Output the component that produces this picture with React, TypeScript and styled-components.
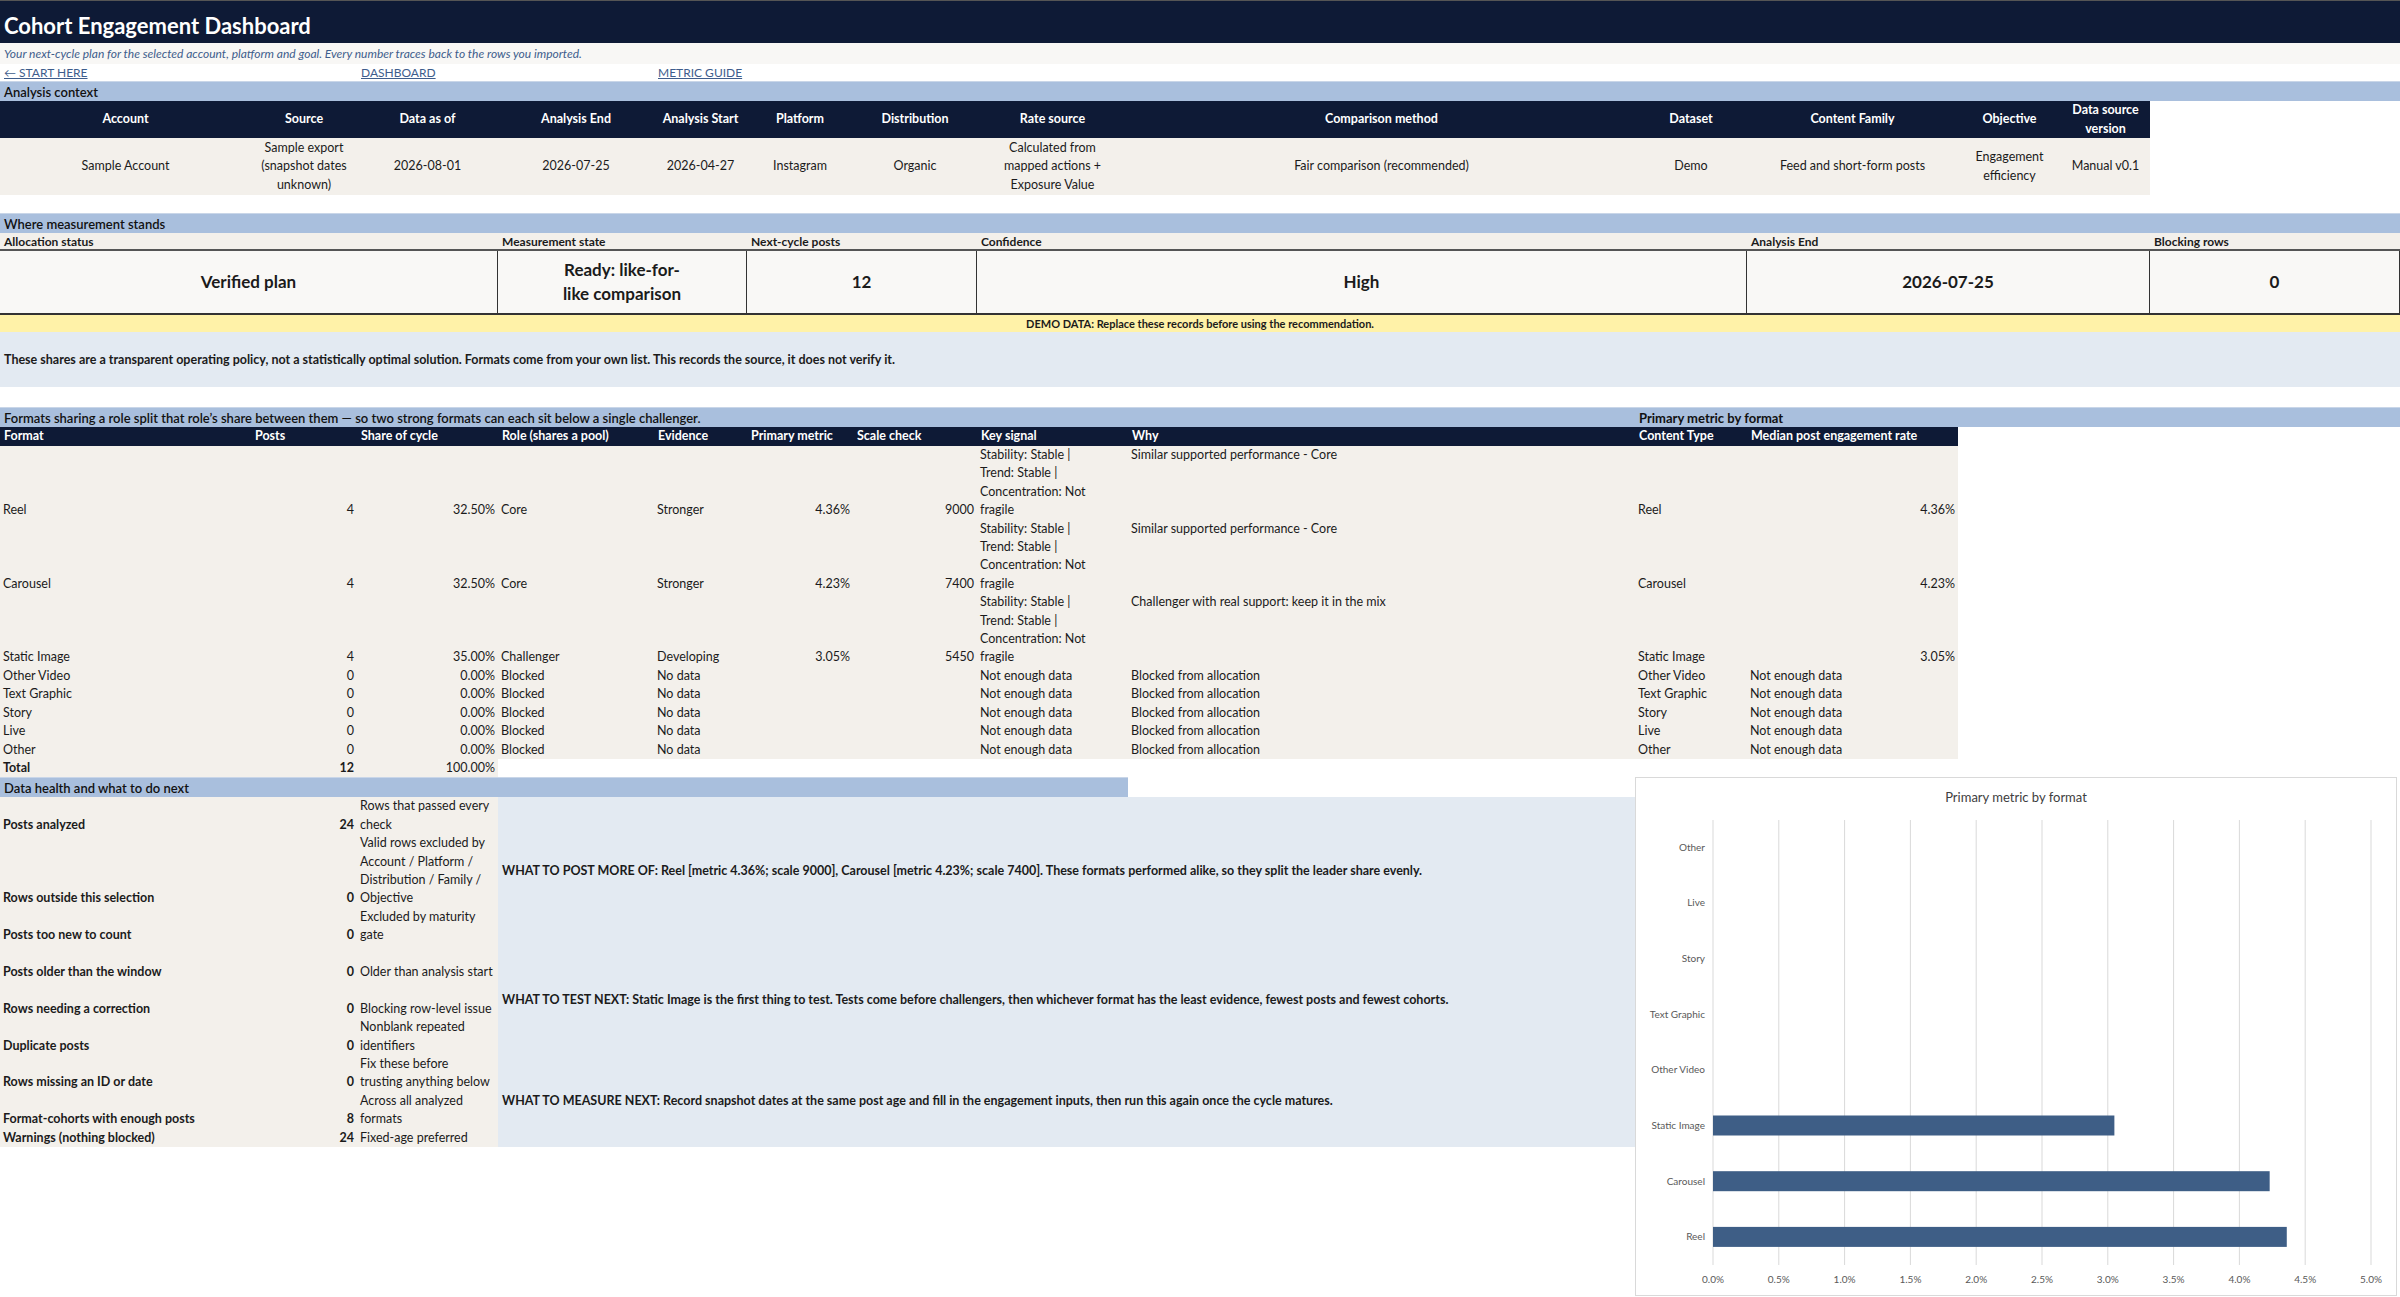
import React from "react";
import styled, { createGlobalStyle } from "styled-components";

const COLS = "251px 106px 141px 156px 93px 106px 124px 151px 507px 112px 211px 103px 89px 250px";
const L = 18.4;
const NAVY = "#0e1a36";
const BAND = "#a9bfdd";
const BEIGE = "#f3f0eb";
const SOFT = "#e3eaf2";

const Global = createGlobalStyle`
  html, body { margin: 0; background: #fff; }
  body { font-family: Lato, "Open Sans", sans-serif; font-size: 12.5px; color: #1b1b1b; }
  * { box-sizing: border-box; }
`;

const Page = styled.div`width: 2400px; display: flex; flex-direction: column;`;
const TitleBar = styled.div`
  height: 43px; background: ${NAVY}; color: #fff; font-weight: 700; font-size: 22px;
  display: flex; align-items: flex-end; padding: 0 4px 4px; border-top: 1px solid #555;
`;
const Subtitle = styled.div`
  height: 21px; background: #f8f7f5; color: #3e5d8c; font-style: italic; font-size: 12px;
  display: flex; align-items: center; padding-left: 4px;
`;
const Sheet = styled.div<{ $mt?: number }>`
  display: grid; grid-template-columns: ${COLS}; margin-top: ${(p) => p.$mt ?? 0}px;
`;
const LinkCell = styled.a<{ $col: string }>`
  grid-column: ${(p) => p.$col}; height: 17px; line-height: 17px; font-size: 12px;
  color: #3e5d8c; text-decoration: underline; padding-left: 4px;
`;
const Band = styled.div<{ $col: string; $bold?: boolean }>`
  grid-column: ${(p) => p.$col}; height: 20px; background: ${BAND}; display: flex; align-items: center;
  padding-left: 4px; font-weight: ${(p) => (p.$bold ? 700 : 600)}; font-size: 13px; color: #111;
  border-top: 1px solid #c9d6e8;
`;
const HeadCell = styled.div<{ $h: number; $left?: boolean }>`
  background: ${NAVY}; color: #fff; font-weight: 700; height: ${(p) => p.$h}px;
  display: flex; align-items: center; justify-content: ${(p) => (p.$left ? "flex-start" : "center")};
  text-align: ${(p) => (p.$left ? "left" : "center")}; padding: 0 4px; line-height: ${L}px;
`;
const CtxCell = styled.div`
  background: ${BEIGE}; height: 57px; display: flex; align-items: center; justify-content: center;
  text-align: center; line-height: ${L}px; padding: 0 4px;
`;
const Empty = styled.div<{ $col?: string }>`grid-column: ${(p) => p.$col ?? "auto"};`;
const LabelCell = styled.div<{ $col: string }>`
  grid-column: ${(p) => p.$col}; height: 18px; background: ${BEIGE}; font-weight: 700; font-size: 12px;
  display: flex; align-items: flex-end; padding-left: 4px; border-bottom: 2px solid #555;
`;
const BigBox = styled.div<{ $col: string }>`
  grid-column: ${(p) => p.$col}; height: 64px; background: #f9f8f6; border-right: 1px solid #333;
  border-bottom: 2px solid #333; display: flex; align-items: center; justify-content: center;
  text-align: center; font-weight: 700; font-size: 17px; line-height: 24px; padding: 0 60px;
  &:first-child { border-left: 1px solid #333; }
`;
const Demo = styled.div`
  height: 17px; background: #fff2a8; font-weight: 700; font-size: 11px; display: flex;
  align-items: center; justify-content: center;
`;
const Note = styled.div`
  height: 55px; background: ${SOFT}; font-weight: 700; font-size: 12.5px; display: flex;
  align-items: center; padding-left: 4px;
`;
const FCell = styled.div<{ $h: number; $right?: boolean; $top?: boolean; $bold?: boolean; $bg?: string }>`
  background: ${(p) => p.$bg ?? BEIGE}; min-height: ${(p) => p.$h}px; display: flex; flex-direction: column;
  justify-content: ${(p) => (p.$top ? "flex-start" : "flex-end")};
  align-items: ${(p) => (p.$right ? "flex-end" : "flex-start")}; line-height: ${L}px;
  padding: 0 3px; font-weight: ${(p) => (p.$bold ? 700 : 400)}; white-space: nowrap;
`;
const HealthWrap = styled.div`
  display: grid; grid-template-columns: 1635px 765px; align-items: start;
`;
const HealthGrid = styled.div`
  display: grid; grid-template-columns: 251px 106px 141px 1137px; grid-auto-rows: auto;
`;
const Advice = styled.div<{ $row: string }>`
  grid-column: 4; grid-row: ${(p) => p.$row}; background: ${SOFT}; display: flex; align-items: center;
  padding-left: 4px; font-weight: 700; font-size: 12.5px; white-space: nowrap;
`;
const ChartBox = styled.div`
  width: 762px; height: 519px; border: 1px solid #d9d9d9; background: #fff;
`;

const ctxHead = ["Account", "Source", "Data as of", "Analysis End", "Analysis Start", "Platform", "Distribution", "Rate source", "Comparison method", "Dataset", "Content Family", "Objective", "Data source version"];
const ctxData: React.ReactNode[] = [
  "Sample Account",
  <>Sample export<br />(snapshot dates<br />unknown)</>,
  "2026-08-01", "2026-07-25", "2026-04-27", "Instagram", "Organic",
  <>Calculated from<br />mapped actions +<br />Exposure Value</>,
  "Fair comparison (recommended)", "Demo", "Feed and short-form posts",
  <>Engagement<br />efficiency</>, "Manual v0.1",
];

const fHead = ["Format", "Posts", "Share of cycle", "Role (shares a pool)", "Evidence", "Primary metric", "Scale check", "Key signal", "Why", "Content Type", "Median post engagement rate"];
const signal = ["Stability: Stable |", "Trend: Stable |", "Concentration: Not", "fragile"];
type FRow = { f: string; p: string; s: string; r: string; e: string; m?: string; sc?: string; k: string[]; w: string; med?: string };
const fRows: FRow[] = [
  { f: "Reel", p: "4", s: "32.50%", r: "Core", e: "Stronger", m: "4.36%", sc: "9000", k: signal, w: "Similar supported performance - Core", med: "4.36%" },
  { f: "Carousel", p: "4", s: "32.50%", r: "Core", e: "Stronger", m: "4.23%", sc: "7400", k: signal, w: "Similar supported performance - Core", med: "4.23%" },
  { f: "Static Image", p: "4", s: "35.00%", r: "Challenger", e: "Developing", m: "3.05%", sc: "5450", k: signal, w: "Challenger with real support: keep it in the mix", med: "3.05%" },
  ...["Other Video", "Text Graphic", "Story", "Live", "Other"].map((f) => ({ f, p: "0", s: "0.00%", r: "Blocked", e: "No data", k: ["Not enough data"], w: "Blocked from allocation" })),
];

const health: { l: string; v: string; d: string[]; n: number }[] = [
  { l: "Posts analyzed", v: "24", d: ["Rows that passed every", "check"], n: 2 },
  { l: "Rows outside this selection", v: "0", d: ["Valid rows excluded by", "Account / Platform /", "Distribution / Family /", "Objective"], n: 4 },
  { l: "Posts too new to count", v: "0", d: ["Excluded by maturity", "gate"], n: 2 },
  { l: "Posts older than the window", v: "0", d: ["Older than analysis start"], n: 2 },
  { l: "Rows needing a correction", v: "0", d: ["Blocking row-level issue"], n: 2 },
  { l: "Duplicate posts", v: "0", d: ["Nonblank repeated", "identifiers"], n: 2 },
  { l: "Rows missing an ID or date", v: "0", d: ["Fix these before", "trusting anything below"], n: 2 },
  { l: "Format-cohorts with enough posts", v: "8", d: ["Across all analyzed", "formats"], n: 2 },
  { l: "Warnings (nothing blocked)", v: "24", d: ["Fixed-age preferred"], n: 1 },
];

function Chart() {
  const cats = ["Other", "Live", "Story", "Text Graphic", "Other Video", "Static Image", "Carousel", "Reel"];
  const vals: Record<string, number> = { "Static Image": 3.05, Carousel: 4.23, Reel: 4.36 };
  const x0 = 77, x1 = 735, w = x1 - x0;
  const y0 = 42, step = 55.7, top = 69;
  return (
    <svg width="760" height="517" viewBox="0 0 760 517" fontFamily="Lato, sans-serif">
      <text x="380" y="24" textAnchor="middle" fontSize="13" fill="#404040">Primary metric by format</text>
      {Array.from({ length: 11 }, (_, i) => {
        const x = x0 + (w * i) / 10;
        return (
          <g key={i}>
            <line x1={x} x2={x} y1={y0} y2={487} stroke="#d9d9d9" strokeWidth="1" />
            <text x={x} y={505} textAnchor="middle" fontSize="10" fill="#595959">{(i * 0.5).toFixed(1)}%</text>
          </g>
        );
      })}
      {cats.map((c, i) => {
        const y = top + i * step;
        const v = vals[c];
        return (
          <g key={c}>
            <text x={x0 - 8} y={y + 3.5} textAnchor="end" fontSize="10" fill="#595959">{c}</text>
            {v && <rect x={x0} y={y - 10} width={(w * v) / 5} height={20} fill="#3e5e86" />}
          </g>
        );
      })}
    </svg>
  );
}

export default function App() {
  return (
    <Page>
      <Global />
      <TitleBar>Cohort Engagement Dashboard</TitleBar>
      <Subtitle>Your next-cycle plan for the selected account, platform and goal. Every number traces back to the rows you imported.</Subtitle>
      <Sheet>
        <LinkCell $col="1 / 3">← START HERE</LinkCell>
        <LinkCell $col="3 / 5">DASHBOARD</LinkCell>
        <LinkCell $col="5 / 8">METRIC GUIDE</LinkCell>
      </Sheet>
      <Sheet>
        <Band $col="1 / -1">Analysis context</Band>
        {ctxHead.map((h) => <HeadCell key={h} $h={37}>{h}</HeadCell>)}
        <Empty />
        {ctxData.map((d, i) => <CtxCell key={i}>{d}</CtxCell>)}
        <Empty />
      </Sheet>
      <Sheet $mt={18}>
        <Band $col="1 / -1">Where measurement stands</Band>
        <LabelCell $col="1 / 4">Allocation status</LabelCell>
        <LabelCell $col="4 / 6">Measurement state</LabelCell>
        <LabelCell $col="6 / 8">Next-cycle posts</LabelCell>
        <LabelCell $col="8 / 11">Confidence</LabelCell>
        <LabelCell $col="11 / 14">Analysis End</LabelCell>
        <LabelCell $col="14 / 15">Blocking rows</LabelCell>
        <BigBox $col="1 / 4">Verified plan</BigBox>
        <BigBox $col="4 / 6">Ready: like-for-like comparison</BigBox>
        <BigBox $col="6 / 8">12</BigBox>
        <BigBox $col="8 / 11">High</BigBox>
        <BigBox $col="11 / 14">2026-07-25</BigBox>
        <BigBox $col="14 / 15">0</BigBox>
      </Sheet>
      <Demo>DEMO DATA: Replace these records before using the recommendation.</Demo>
      <Note>These shares are a transparent operating policy, not a statistically optimal solution. Formats come from your own list. This records the source, it does not verify it.</Note>
      <Sheet $mt={20}>
        <Band $col="1 / 10">Formats sharing a role split that role’s share between them — so two strong formats can each sit below a single challenger.</Band>
        <Band $col="10 / -1" $bold>Primary metric by format</Band>
        {fHead.map((h) => <HeadCell key={h} $h={19} $left>{h}</HeadCell>)}
        <Empty $col="12 / -1" />
        {fRows.map((r) => {
          const h = r.k.length * L;
          return (
            <React.Fragment key={r.f}>
              <FCell $h={h}>{r.f}</FCell>
              <FCell $h={h} $right>{r.p}</FCell>
              <FCell $h={h} $right>{r.s}</FCell>
              <FCell $h={h}>{r.r}</FCell>
              <FCell $h={h}>{r.e}</FCell>
              <FCell $h={h} $right>{r.m ?? ""}</FCell>
              <FCell $h={h} $right>{r.sc ?? ""}</FCell>
              <FCell $h={h}>{r.k.map((k) => <span key={k}>{k}</span>)}</FCell>
              <FCell $h={h} $top>{r.w}</FCell>
              <FCell $h={h}>{r.f}</FCell>
              <FCell $h={h} $right={!!r.med}>{r.med ?? "Not enough data"}</FCell>
              <Empty $col="12 / -1" />
            </React.Fragment>
          );
        })}
        <FCell $h={L} $bold>Total</FCell>
        <FCell $h={L} $right $bold>12</FCell>
        <FCell $h={L} $right>100.00%</FCell>
        <Empty $col="4 / -1" />
      </Sheet>
      <HealthWrap>
        <HealthGrid>
          <Band $col="1 / 4" style={{ gridRow: 1 }}>Data health and what to do next</Band>
          <Band $col="4 / 5" style={{ gridRow: 1, width: 630 }}> </Band>
          {health.map((h, i) => (
            <React.Fragment key={h.l}>
              <FCell $h={h.n * L} $bold style={{ gridColumn: 1, gridRow: i + 2 }}>{h.l}</FCell>
              <FCell $h={h.n * L} $bold $right style={{ gridColumn: 2, gridRow: i + 2 }}>{h.v}</FCell>
              <FCell $h={h.n * L} style={{ gridColumn: 3, gridRow: i + 2 }}>{h.d.map((d) => <span key={d}>{d}</span>)}</FCell>
            </React.Fragment>
          ))}
          <Advice $row="2 / 5">WHAT TO POST MORE OF: Reel [metric 4.36%; scale 9000], Carousel [metric 4.23%; scale 7400]. These formats performed alike, so they split the leader share evenly.</Advice>
          <Advice $row="5 / 8">WHAT TO TEST NEXT: Static Image is the first thing to test. Tests come before challengers, then whichever format has the least evidence, fewest posts and fewest cohorts.</Advice>
          <Advice $row="8 / 11">WHAT TO MEASURE NEXT: Record snapshot dates at the same post age and fill in the engagement inputs, then run this again once the cycle matures.</Advice>
        </HealthGrid>
        <ChartBox><Chart /></ChartBox>
      </HealthWrap>
    </Page>
  );
}
